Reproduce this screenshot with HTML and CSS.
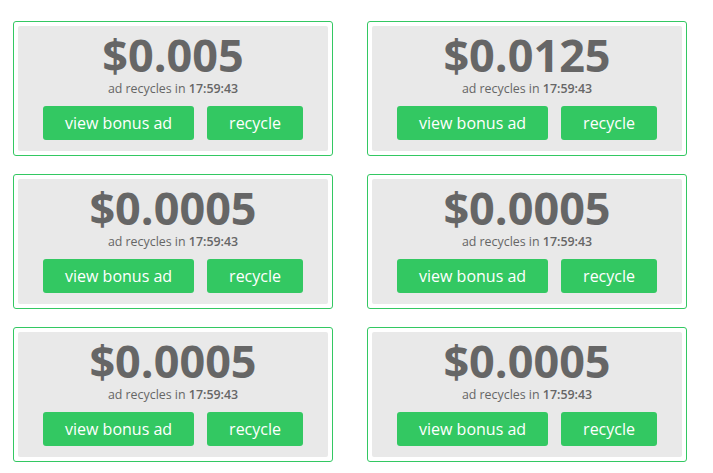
FILE: index.html
```html
<!DOCTYPE html>
<html>
<head>
<meta charset="utf-8">
<link rel="stylesheet" href="styles.css">
</head>
<body>
<div class="grid">
  <div class="card"><div class="inner"><h2 class="amount">$0.005</h2><p class="timer">ad recycles in <b>17:59:43</b></p><div class="actions"><a class="btn">view bonus ad</a><a class="btn">recycle</a></div></div></div>
  <div class="card"><div class="inner"><h2 class="amount">$0.0125</h2><p class="timer">ad recycles in <b>17:59:43</b></p><div class="actions"><a class="btn">view bonus ad</a><a class="btn">recycle</a></div></div></div>
  <div class="card"><div class="inner"><h2 class="amount">$0.0005</h2><p class="timer">ad recycles in <b>17:59:43</b></p><div class="actions"><a class="btn">view bonus ad</a><a class="btn">recycle</a></div></div></div>
  <div class="card"><div class="inner"><h2 class="amount">$0.0005</h2><p class="timer">ad recycles in <b>17:59:43</b></p><div class="actions"><a class="btn">view bonus ad</a><a class="btn">recycle</a></div></div></div>
  <div class="card"><div class="inner"><h2 class="amount">$0.0005</h2><p class="timer">ad recycles in <b>17:59:43</b></p><div class="actions"><a class="btn">view bonus ad</a><a class="btn">recycle</a></div></div></div>
  <div class="card"><div class="inner"><h2 class="amount">$0.0005</h2><p class="timer">ad recycles in <b>17:59:43</b></p><div class="actions"><a class="btn">view bonus ad</a><a class="btn">recycle</a></div></div></div>
</div>
</body>
</html>
```
FILE: styles.css
```css
html, body {
  margin: 0;
  padding: 0;
  background: #fff;
  font-family: "Open Sans", sans-serif;
}
.grid {
  display: grid;
  grid-template-columns: 320px 320px;
  column-gap: 34px;
  row-gap: 18px;
  padding: 21px 0 0 13px;
}
.card {
  border: 1px solid #33c862;
  border-radius: 3px;
  padding: 4px;
  background: #fff;
}
.inner {
  background: #e9e9e9;
  border-radius: 2px;
  height: 125px;
  box-sizing: border-box;
  padding-top: 6px;
  text-align: center;
}
.amount {
  margin: 0;
  font-size: 45px;
  line-height: 46px;
  font-weight: 700;
  color: #666;
}
.timer {
  margin: 3px 0 0;
  font-size: 12.4px;
  line-height: 16px;
  color: #666;
}
.timer b {
  font-weight: 600;
}
.actions {
  display: flex;
  justify-content: center;
  gap: 13px;
  margin-top: 9px;
}
.btn {
  display: block;
  height: 34px;
  line-height: 34px;
  padding: 0 22px;
  background: #33c862;
  color: #fff;
  font-size: 16px;
  border-radius: 3px;
}
```
